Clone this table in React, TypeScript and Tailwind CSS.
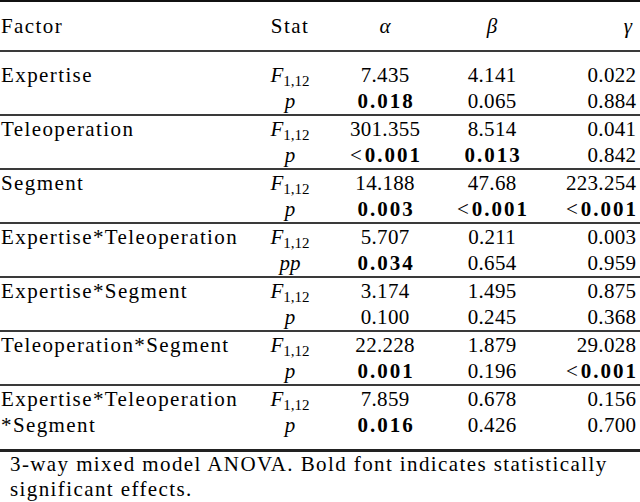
import React from "react";

type Cell = { v: string; b?: boolean };
type Group = {
  factor: [string, string];
  stat2: string;
  rows: [Cell[], Cell[]];
};

const c = (v: string, b = false): Cell => ({ v, b });

const groups: Group[] = [
  { factor: ["Expertise", ""], stat2: "p", rows: [[c("7.435"), c("4.141"), c("0.022")], [c("0.018", true), c("0.065"), c("0.884")]] },
  { factor: ["Teleoperation", ""], stat2: "p", rows: [[c("301.355"), c("8.514"), c("0.041")], [c("<0.001", true), c("0.013", true), c("0.842")]] },
  { factor: ["Segment", ""], stat2: "p", rows: [[c("14.188"), c("47.68"), c("223.254")], [c("0.003", true), c("<0.001", true), c("<0.001", true)]] },
  { factor: ["Expertise*Teleoperation", ""], stat2: "pp", rows: [[c("5.707"), c("0.211"), c("0.003")], [c("0.034", true), c("0.654"), c("0.959")]] },
  { factor: ["Expertise*Segment", ""], stat2: "p", rows: [[c("3.174"), c("1.495"), c("0.875")], [c("0.100"), c("0.245"), c("0.368")]] },
  { factor: ["Teleoperation*Segment", ""], stat2: "p", rows: [[c("22.228"), c("1.879"), c("29.028")], [c("0.001", true), c("0.196"), c("<0.001", true)]] },
  { factor: ["Expertise*Teleoperation", "*Segment"], stat2: "p", rows: [[c("7.859"), c("0.678"), c("0.156")], [c("0.016", true), c("0.426"), c("0.700")]] },
];

const cols = "grid grid-cols-[250px_80px_110px_104px_94px] items-center";

function Val({ cell }: { cell: Cell }) {
  if (!cell.b) return <span className="tracking-[0.3px] mr-[-0.3px]">{cell.v}</span>;
  if (cell.v.startsWith("<")) {
    return (
      <span className="inline-flex items-center">
        <span className="font-normal mr-[3px]">&lt;</span>
        <span className="font-bold tracking-[2px] mr-[-2px]">{cell.v.slice(1)}</span>
      </span>
    );
  }
  return <span className="font-bold tracking-[2px] mr-[-2px]">{cell.v}</span>;
}

function F() {
  return (
    <span className="tracking-normal">
      <i>F</i>
      <span className="text-[15px] relative top-[4px]">1,12</span>
    </span>
  );
}

function Row({ factor, stat, cells }: { factor: string; stat: React.ReactNode; cells: Cell[] }) {
  return (
    <div className={cols + " h-[26px]"}>
      <div className="pl-[1px] whitespace-nowrap tracking-[1.4px]">{factor}</div>
      <div className="text-center">{stat}</div>
      <div className="text-center"><Val cell={cells[0]} /></div>
      <div className="text-center"><Val cell={cells[1]} /></div>
      <div className="text-right pr-[2px]"><Val cell={cells[2]} /></div>
    </div>
  );
}

const rule = "h-[2px] bg-[#3a3a3a]";

export default function App() {
  return (
    <div className="w-[640px] h-[502px] bg-white text-black overflow-hidden text-[21px] leading-none font-['Liberation_Serif',serif]">
      <div className="h-[2px] bg-[#111]" />
      <div className={cols + " h-[48px]"}>
        <div className="pl-[1px] tracking-[1.4px]">Factor</div>
        <div className="text-center tracking-[1.4px]">Stat</div>
        <div className="text-center"><i>α</i></div>
        <div className="text-center"><i>β</i></div>
        <div className="text-right pr-[6px]"><i>γ</i></div>
      </div>
      <div className={rule} />
      <div className="h-[10px]" />
      {groups.map((g, i) => (
        <div key={i}>
          <Row factor={g.factor[0]} stat={<F />} cells={g.rows[0]} />
          <Row factor={g.factor[1]} stat={<i>{g.stat2}</i>} cells={g.rows[1]} />
          {i < groups.length - 1 && <div className={rule} />}
        </div>
      ))}
      <div className="h-[11px]" />
      <div className="h-[3px] bg-[#222]" />
      <div className="pl-[10px] leading-[25px] tracking-[1.4px] whitespace-nowrap">
        <div>3-way mixed model ANOVA. Bold font indicates statistically</div>
        <div>significant effects.</div>
      </div>
    </div>
  );
}
